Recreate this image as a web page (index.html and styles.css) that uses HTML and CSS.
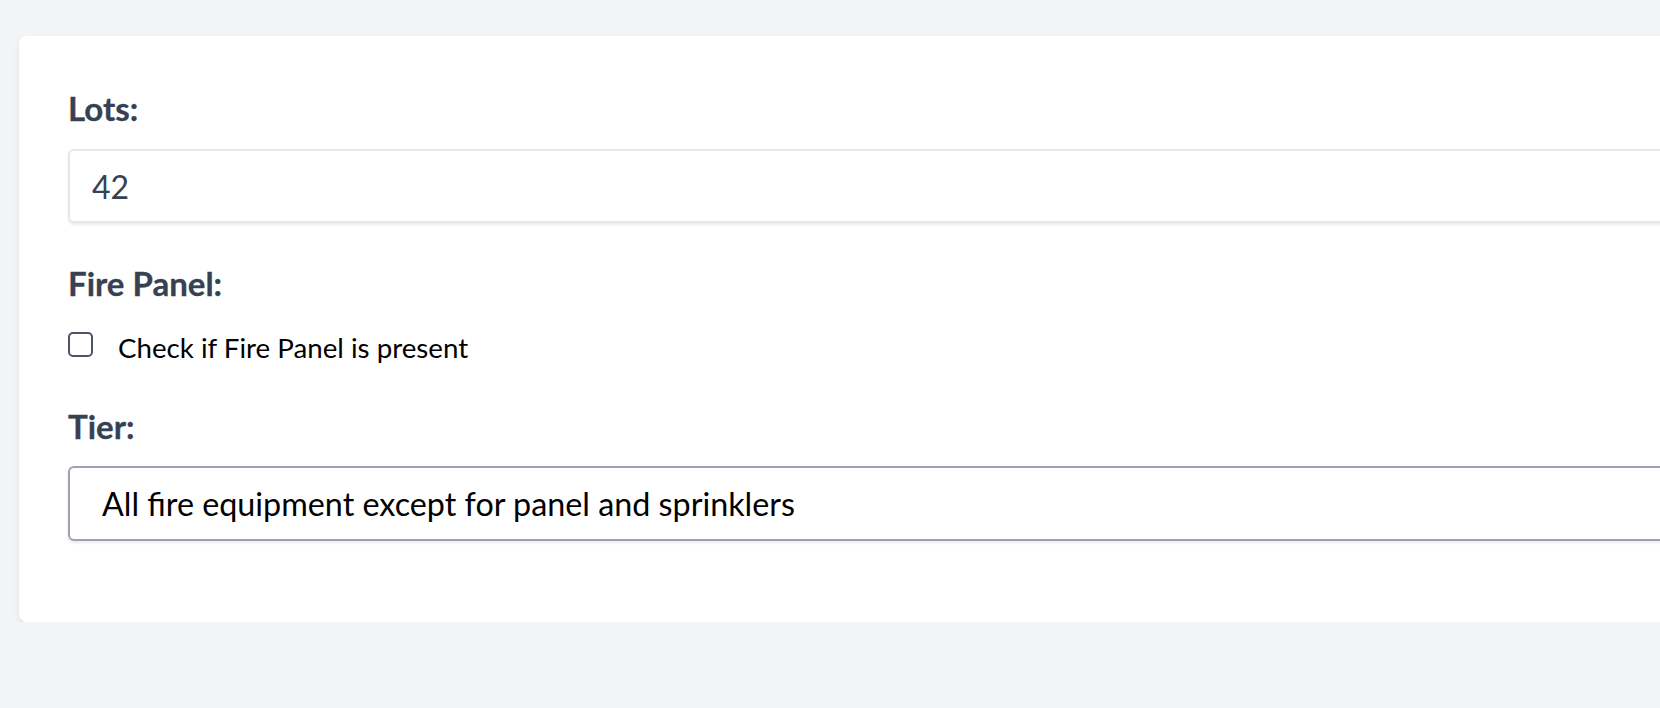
FILE: index.html
```html
<!DOCTYPE html>
<html lang="en">
<head>
<meta charset="utf-8">
<title>Lot form</title>
<link rel="stylesheet" href="styles.css">
</head>
<body>
<div class="page">
  <form class="card">
    <label class="field-label" for="lots">Lots:</label>
    <input class="text-input" id="lots" type="text" value="42">

    <div class="field-label field-gap">Fire Panel:</div>
    <label class="check-row">
      <input class="check" type="checkbox">
      <span class="check-text">Check if Fire Panel is present</span>
    </label>

    <label class="field-label tier-gap" for="tier">Tier:</label>
    <select class="select" id="tier">
      <option>All fire equipment except for panel and sprinklers</option>
    </select>
  </form>
</div>
</body>
</html>
```

FILE: styles.css
```css
html, body {
  margin: 0;
  padding: 0;
  background: #f3f4f6;
  overflow: hidden;
}

.page {
  padding: 36px 0 0 19px;
  font-family: Lato, "Noto Sans", sans-serif;
}

.card {
  display: flex;
  flex-direction: column;
  align-items: flex-start;
  width: 1760px;
  box-sizing: border-box;
  background: #ffffff;
  border-radius: 8px;
  box-shadow: 0 4px 8px -2px rgba(0, 0, 0, 0.10), 0 2px 4px -2px rgba(0, 0, 0, 0.08);
  padding: 52px 49px 81px 49px;
}

.field-label {
  display: block;
  font-size: 33px;
  line-height: 40px;
  font-weight: 700;
  color: #374151;
  -webkit-text-stroke: 0.3px #374151;
}

.field-gap {
  margin-top: 40px;
}

.tier-gap {
  margin-top: 43px;
}

.text-input {
  margin-top: 21px;
  width: 100%;
  height: 74px;
  box-sizing: border-box;
  border: 2px solid #e5e7eb;
  border-radius: 6px;
  padding: 0 22px;
  font-family: inherit;
  font-size: 32px;
  color: #374151;
  background: #fff;
  box-shadow: 0 2px 3px rgba(0, 0, 0, 0.08);
  outline: none;
}

.check-row {
  margin-top: 29px;
  display: flex;
  align-items: flex-start;
  gap: 25px;
}

.check {
  appearance: none;
  -webkit-appearance: none;
  margin: 0;
  width: 25px;
  height: 25px;
  box-sizing: border-box;
  border: 2px solid #4b5563;
  border-radius: 5px;
  background: #fff;
}

.check-text {
  font-size: 27.7px;
  line-height: 31px;
  color: #000;
}

.select {
  appearance: none;
  -webkit-appearance: none;
  margin-top: 20px;
  width: 100%;
  height: 75px;
  box-sizing: border-box;
  border: 2px solid #9ca3af;
  border-radius: 6px;
  padding: 0 32px;
  font-family: inherit;
  font-size: 32.3px;
  color: #000;
  background: #fff;
  box-shadow: 0 2px 3px rgba(0, 0, 0, 0.08);
  outline: none;
}
```
